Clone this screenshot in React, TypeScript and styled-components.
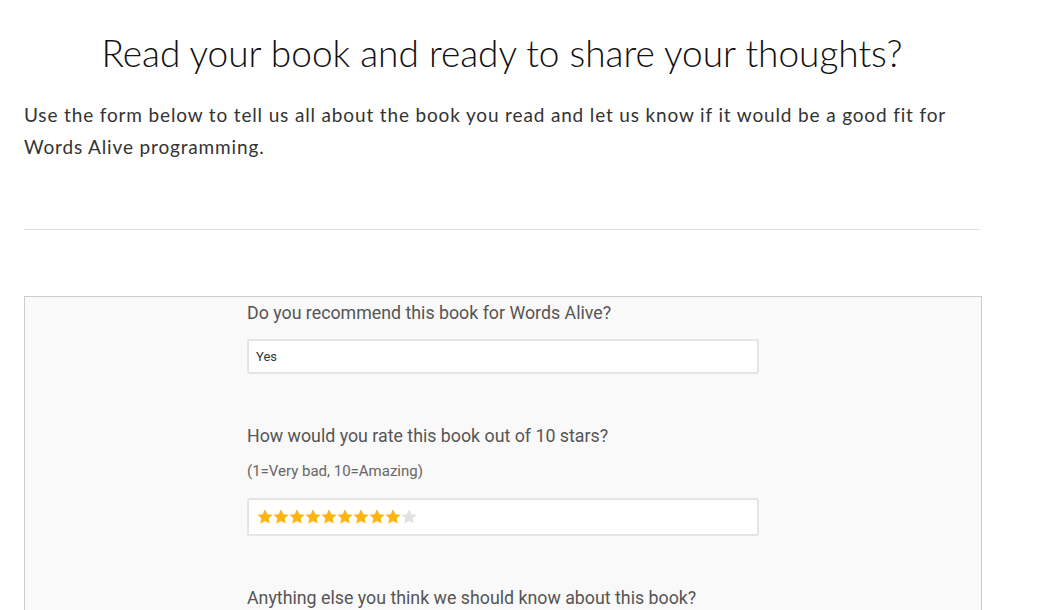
import styled, { createGlobalStyle } from 'styled-components'

const GlobalStyle = createGlobalStyle`
	html, body {
		margin: 0;
		padding: 0;
		background: #ffffff;
	}
	body {
		font-family: 'Lato', 'Liberation Sans', sans-serif;
		overflow: hidden;
	}
`

const Page = styled.div`
	width: 956px;
	padding: 0 0 0 24px;
`

const Title = styled.h1`
	margin: 0;
	padding-top: 30px;
	text-align: center;
	font-family: 'Lato', sans-serif;
	font-weight: 300;
	font-size: 37px;
	line-height: 46px;
	color: #111;
`

const Intro = styled.p`
	margin: 23px 0 0;
	font-family: 'Lato', sans-serif;
	font-size: 19px;
	line-height: 32px;
	letter-spacing: 0.85px;
	color: #333;
`

const Rule = styled.hr`
	margin: 66px 0 0;
	border: 0;
	border-top: 1px solid #dddddd;
	height: 0;
`

const FormBox = styled.div`
	margin-top: 66px;
	width: 956px;
	border: 1px solid #cccccc;
	background: #f9f9f9;
	display: flex;
	justify-content: center;
	padding-bottom: 40px;
`

const Column = styled.div`
	width: 512px;
	display: flex;
	flex-direction: column;
	gap: 46px;
	font-family: 'Roboto', sans-serif;
`

const Field = styled.div`
	display: flex;
	flex-direction: column;
`

const Label = styled.label`
	font-size: 17.8px;
	line-height: 30px;
	color: #555555;
	padding-top: 1px;
`

const Hint = styled.div`
	font-size: 15px;
	line-height: 20px;
	color: #666666;
	margin-top: 10px;
`

const Box = styled.div<{ $tall?: boolean }>`
	margin-top: ${p => (p.$tall ? '17px' : '11px')};
	height: ${p => (p.$tall ? '34px' : '31px')};
	background: #ffffff;
	border: 2px solid #e5e5e5;
	border-radius: 2px;
	display: flex;
	align-items: center;
	padding: 0 7px;
	font-size: 13px;
	color: #333;
`

const Stars = styled.div`
	display: flex;
	margin-left: 1px;
`

const Star = ({ on }: { on: boolean }) => (
	<svg width="16" height="16" viewBox="0 0 24 24" overflow="visible">
		<path
			d="M12 0.5l3.4 7.2 7.9.9-5.9 5.4 1.7 7.8L12 17.9l-7.1 3.9 1.7-7.8L.7 8.6l7.9-.9z"
			fill={on ? '#fbb40c' : '#e2e2e2'}
		/>
	</svg>
)

export default function App() {
	return (
		<>
			<GlobalStyle />
			<Page>
				<Title>Read your book and ready to share your thoughts?</Title>
				<Intro>
					Use the form below to tell us all about the book you read and let us know if it would be a good fit for
					Words Alive programming.
				</Intro>
				<Rule />
				<FormBox>
					<Column>
						<Field>
							<Label>Do you recommend this book for Words Alive?</Label>
							<Box>Yes</Box>
						</Field>
						<Field>
							<Label>How would you rate this book out of 10 stars?</Label>
							<Hint>(1=Very bad, 10=Amazing)</Hint>
							<Box $tall>
								<Stars>
									{Array.from({ length: 10 }, (_, i) => (
										<Star key={i} on={i < 9} />
									))}
								</Stars>
							</Box>
						</Field>
						<Field>
							<Label>Anything else you think we should know about this book?</Label>
						</Field>
					</Column>
				</FormBox>
			</Page>
		</>
	)
}
